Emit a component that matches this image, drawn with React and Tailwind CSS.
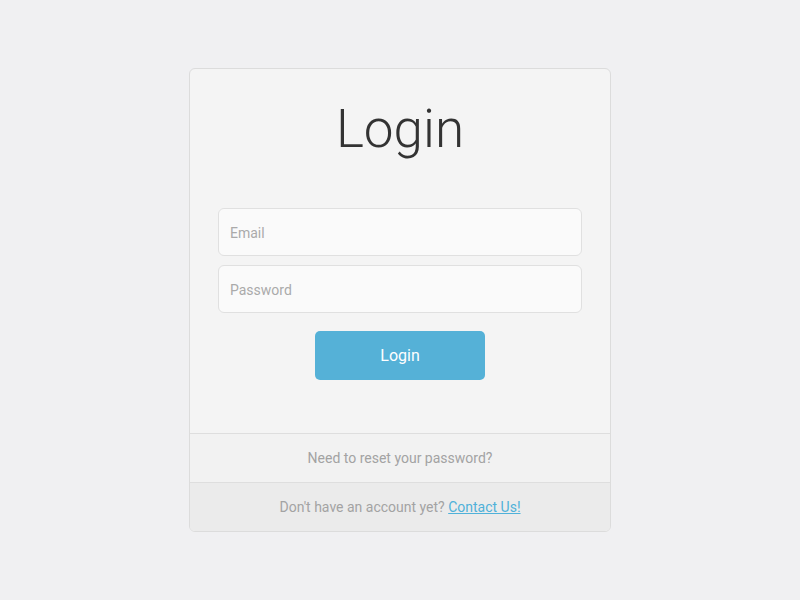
export default function App() {
  return (
    <div className="min-h-[600px] w-full bg-[#f0f0f2] pt-[68px]" style={{ fontFamily: 'Roboto, "Liberation Sans", sans-serif' }}>
      <div className="mx-auto w-[422px] rounded-[6px] border border-[#dcdcdc] bg-[#f4f4f4] overflow-hidden">
        <div className="px-[28px] pt-[34px] pb-[53px]">
          <h1 className="text-center text-[53px] leading-none font-light text-[#333333]">Login</h1>
          <div className="mt-[52px] flex flex-col gap-[9px]">
            <input
              className="h-[48px] w-full rounded-[6px] border border-[#e0e0e0] bg-[#fafafa] px-[11px] pt-[1px] text-[14px] text-[#555] placeholder:text-[#aaaaaa] outline-none"
              placeholder="Email"
            />
            <input
              type="password"
              className="h-[48px] w-full rounded-[6px] border border-[#e0e0e0] bg-[#fafafa] px-[11px] pt-[1px] text-[14px] text-[#555] placeholder:text-[#aaaaaa] outline-none"
              placeholder="Password"
            />
          </div>
          <div className="mt-[18px] flex justify-center">
            <button className="h-[49px] w-[170px] rounded-[5px] bg-[#55b1d7] pt-[1px] text-[16px] text-white">Login</button>
          </div>
        </div>
        <div className="flex h-[49px] items-center justify-center border-t border-[#dedede] bg-[#f2f2f2] pt-[1px] text-[14px] text-[#a3a3a3]">
          Need to reset your password?
        </div>
        <div className="flex h-[49px] items-center justify-center border-t border-[#dedede] bg-[#ebebeb] pt-[1px] text-[14px] text-[#a3a3a3]">
          Don't have an account yet?&nbsp;<a href="#" className="text-[#4fb1d9] underline">Contact Us!</a>
        </div>
      </div>
    </div>
  );
}
